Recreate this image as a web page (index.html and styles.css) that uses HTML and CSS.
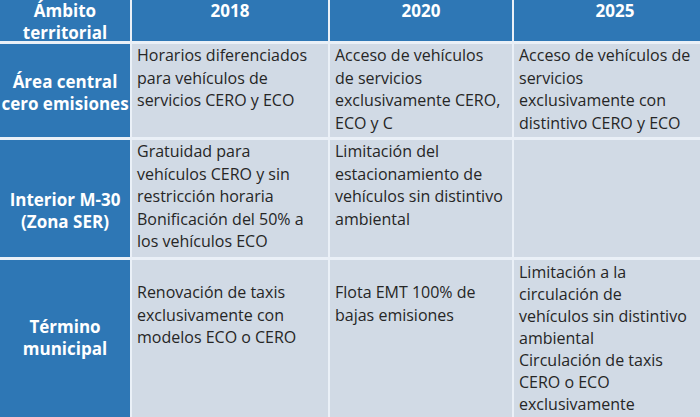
FILE: index.html
```html
<!DOCTYPE html>
<html lang="es">
<head>
<meta charset="utf-8">
<title>Ámbito territorial</title>
<link rel="stylesheet" href="styles.css">
</head>
<body>
<div class="table">
  <div class="head">Ámbito<br>territorial</div>
  <div class="head">2018</div>
  <div class="head">2020</div>
  <div class="head">2025</div>

  <div class="lab r1">Área central<br>cero emisiones</div>
  <div class="cell">Horarios diferenciados<br>para vehículos de<br>servicios CERO y ECO</div>
  <div class="cell">Acceso de vehículos<br>de servicios<br>exclusivamente CERO,<br>ECO y C</div>
  <div class="cell">Acceso de vehículos de<br>servicios<br>exclusivamente con<br>distintivo CERO y ECO</div>

  <div class="lab r2">Interior M-30<br>(Zona SER)</div>
  <div class="cell">Gratuidad para<br>vehículos CERO y sin<br>restricción horaria<br>Bonificación del 50% a<br>los vehículos ECO</div>
  <div class="cell">Limitación del<br>estacionamiento de<br>vehículos sin distintivo<br>ambiental</div>
  <div class="cell"></div>

  <div class="lab r3">Término<br>municipal</div>
  <div class="cell low">Renovación de taxis<br>exclusivamente con<br>modelos ECO o CERO</div>
  <div class="cell low">Flota EMT 100% de<br>bajas emisiones</div>
  <div class="cell tight">Limitación a la<br>circulación de<br>vehículos sin distintivo<br>ambiental<br>Circulación de taxis<br>CERO o ECO<br>exclusivamente</div>
</div>
</body>
</html>
```

FILE: styles.css
```css
html, body {
  margin: 0;
  padding: 0;
  width: 700px;
  height: 417px;
  overflow: hidden;
  background: #ffffff;
}

.table {
  display: grid;
  width: 716px;
  grid-template-columns: 130px 196px 182px 202px;
  grid-template-rows: 41px 93px 117px 160px;
  column-gap: 2px;
  row-gap: 3px;
  background: #eaf0f7;
  font-family: "Open Sans", "Liberation Sans", sans-serif;
  font-size: 16px;
}

.head,
.lab {
  background: #2e77b5;
  color: #ffffff;
  font-weight: bold;
  font-size: 17px;
  text-align: center;
  line-height: 22px;
}

.r1 { padding-top: 27px; }
.r2 { padding-top: 49px; }
.r3 { padding-top: 56px; }

.cell {
  background: #d1dae5;
  color: #262626;
  line-height: 22.5px;
  white-space: nowrap;
  padding: 0 0 0 5px;
}

.cell.low { padding-top: 21px; }
.cell.tight {
  line-height: 22px;
  padding-top: 1px;
}
```
